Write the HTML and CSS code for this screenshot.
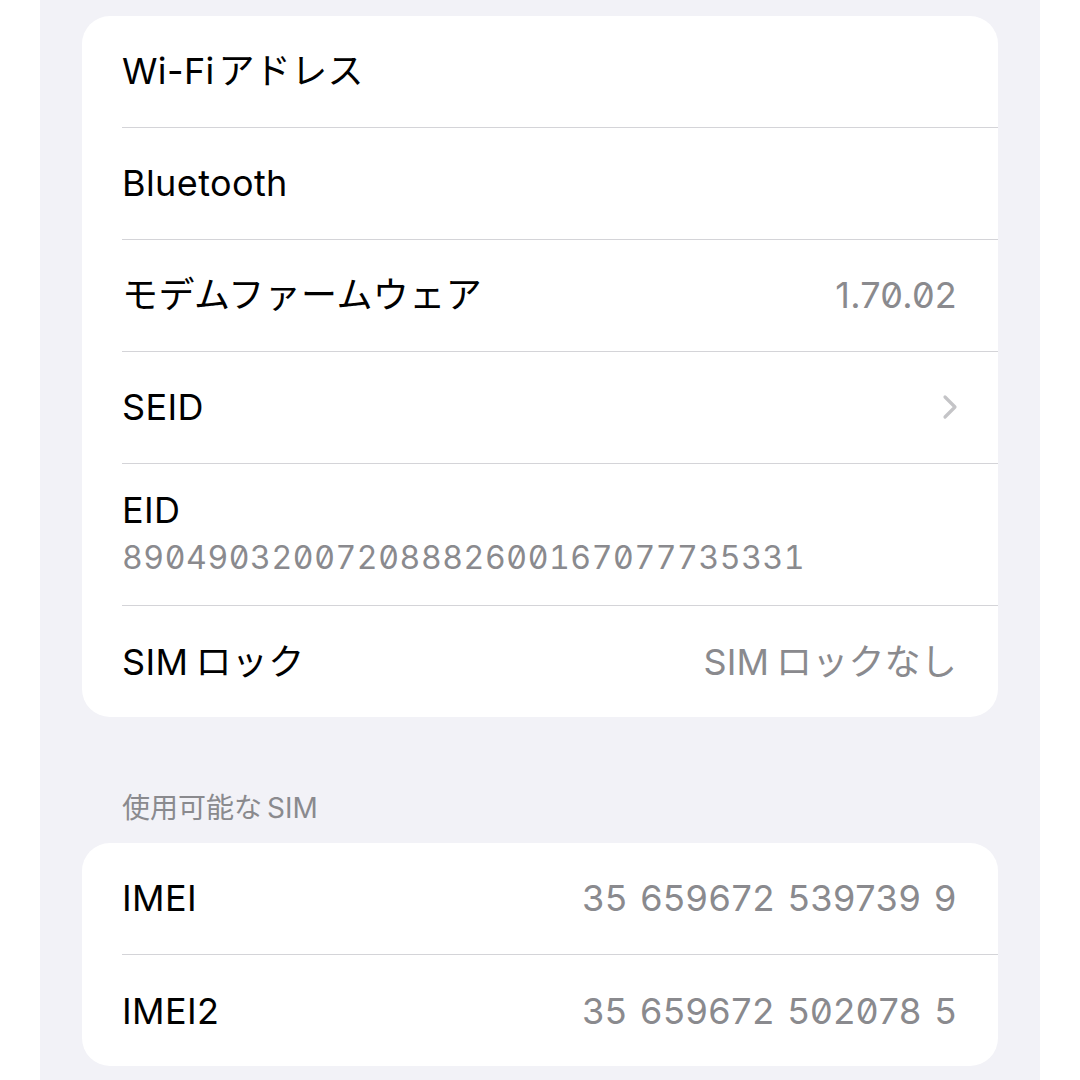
FILE: index.html
```html
<!DOCTYPE html>
<html lang="ja">
<head>
    <meta charset="UTF-8">
    <title>情報</title>
    <meta name="viewport" content="width=device-width, initial-scale=1.0">
    <link rel="stylesheet" href="styles.css">
</head>
<body>
<div id="wrap">
    <div class="group">
        <div class="row"><div class="cell"><span class="label">Wi-Fi&#8202;アドレス</span></div></div>
        <div class="row"><div class="cell"><span class="label">Bluetooth</span></div></div>
        <div class="row"><div class="cell"><span class="label">モデムファームウェア</span><span class="value num">1.70.02</span></div></div>
        <div class="row"><div class="cell"><span class="label">SEID</span>
            <svg class="chev" width="18" height="26" viewBox="0 0 18 26"><polyline points="4,3 14,13 4,23" fill="none" stroke="#c4c4c7" stroke-width="3.2" stroke-linecap="round" stroke-linejoin="round"/></svg>
        </div></div>
        <div class="row"><div class="cell stack"><span class="label">EID</span><span class="sub mono">89049032007208882600167077735331</span></div></div>
        <div class="row"><div class="cell"><span class="label">SIM&#8201;ロック</span><span class="value">SIM&#8201;ロックなし</span></div></div>
    </div>

    <div class="caption">使用可能な&#8201;SIM</div>

    <div class="group">
        <div class="row"><div class="cell"><span class="label">IMEI</span><span class="value num imei">35 659672 539739 9</span></div></div>
        <div class="row"><div class="cell"><span class="label">IMEI2</span><span class="value num imei">35 659672 502078 5</span></div></div>
    </div>
</div>
</body>
</html>
```

FILE: styles.css
```css
* {
    margin: 0;
    padding: 0;
    box-sizing: border-box;
}

body {
    background-color: #fff;
    font-family: Inter, "Noto Sans CJK JP", sans-serif;
    color: #000;
}

#wrap {
    width: 1000px;
    height: 1080px;
    margin: 0 40px;
    padding: 16px 42px 0;
    background-color: #f2f2f7;
    overflow: hidden;
}

#wrap .group {
    background-color: #fff;
    border-radius: 28px;
    overflow: hidden;
}

#wrap .row {
    padding-left: 40px;
}

#wrap .cell {
    display: flex;
    align-items: center;
    justify-content: space-between;
    height: 112px;
    padding: 0 41px 1px 0;
    border-bottom: 1px solid #d4d4d8;
}

#wrap .row:last-child .cell {
    height: 111px;
    border-bottom: none;
    padding-bottom: 0;
}

#wrap .cell.stack {
    flex-direction: column;
    align-items: flex-start;
    justify-content: center;
    height: 142px;
    gap: 6px;
}

#wrap .label {
    font-size: 36px;
    line-height: 42px;
    letter-spacing: 0.4px;
}

#wrap .value {
    font-size: 36px;
    line-height: 42px;
    color: #8a8a8e;
    letter-spacing: 0.2px;
}

#wrap .value.imei {
    letter-spacing: 0.6px;
    word-spacing: 2px;
}

#wrap .num {
    font-feature-settings: "zero";
}

#wrap .mono {
    font-feature-settings: "tnum", "zero";
}

#wrap .sub {
    font-size: 32px;
    line-height: 42px;
    color: #8a8a8e;
    letter-spacing: 0.6px;
}

#wrap .chev {
    margin-right: -2px;
}

#wrap .caption {
    padding: 74px 0 18px 40px;
    font-size: 28px;
    line-height: 34px;
    color: #8a8a8e;
}
```
